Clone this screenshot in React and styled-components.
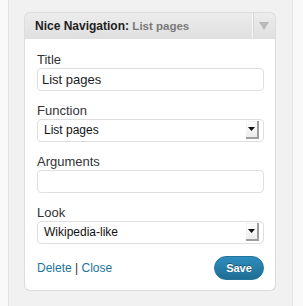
import styled, { createGlobalStyle } from 'styled-components';

const GlobalStyle = createGlobalStyle`
  html, body {
    margin: 0;
    padding: 0;
    background: #f9f9f9;
  }
  body {
    font-family: "Liberation Sans", Arial, sans-serif;
    color: #333;
  }
`;

const Column = styled.div`
  margin-left: 8px;
  width: 285px;
  height: 306px;
  box-sizing: border-box;
  border-left: 1px solid #e3e3e3;
  border-right: 1px solid #e3e3e3;
  background: #f1f1f1;
  padding: 12px 16px 0 15px;
`;

const Widget = styled.div`
  width: 252px;
`;

const Header = styled.div`
  display: flex;
  height: 27px;
  box-sizing: border-box;
  border: 1px solid #dcdcdc;
  border-bottom: none;
  border-radius: 6px 6px 0 0;
  background: linear-gradient(to bottom, #ececec, #dfdfdf);
`;

const HeaderTitle = styled.h3`
  flex: 1;
  margin: 0;
  padding-left: 10px;
  font-size: 12px;
  line-height: 26px;
  font-weight: bold;
  color: #1e1e1e;
  white-space: nowrap;
  span {
    font-size: 11.5px;
    color: #7a7a7a;
  }
`;

const Toggle = styled.div`
  width: 22px;
  display: flex;
  align-items: center;
  justify-content: center;
  border-left: 1px solid #f7f7f7;
  box-shadow: inset 1px 0 0 #d8d8d8;
`;

const Body = styled.div`
  background: #fff;
  border: 1px solid #dcdcdc;
  border-top: none;
  border-radius: 0 0 6px 6px;
  padding: 13px 11px 10px 12px;
`;

const Field = styled.div`
  margin-bottom: 12px;
`;

const Label = styled.label`
  display: block;
  font-size: 13px;
  line-height: 16px;
  color: #333;
`;

const Input = styled.input`
  display: block;
  width: 227px;
  height: 23px;
  box-sizing: border-box;
  border: 1px solid #dfdfdf;
  border-radius: 4px;
  padding: 0 4px;
  font-family: "Liberation Sans", Arial, sans-serif;
  font-size: 13px;
  color: #222;
  background: #fff;
  outline: none;
`;

const SelectBox = styled.div`
  display: flex;
  align-items: center;
  justify-content: space-between;
  width: 227px;
  height: 23px;
  box-sizing: border-box;
  border: 1px solid #dfdfdf;
  border-radius: 4px;
  padding: 0 4px 1px 6px;
  font-size: 12px;
  color: #111;
  background: #fff;
`;

const ArrowButton = styled.span`
  width: 13px;
  height: 18px;
  box-sizing: border-box;
  display: flex;
  align-items: center;
  justify-content: center;
  background: linear-gradient(to bottom, #ffffff, #ececec);
  border-right: 2px solid #9e9e9e;
  border-bottom: 2px solid #9e9e9e;
  box-shadow: inset 1px 1px 0 #f4f4f4;
`;

const Footer = styled.div`
  display: flex;
  align-items: center;
  justify-content: space-between;
  margin-top: 12px;
`;

const Links = styled.div`
  font-size: 12px;
  color: #333;
  a {
    color: #21759b;
    text-decoration: none;
  }
`;

const SaveButton = styled.button`
  width: 50px;
  height: 24px;
  border: 1px solid #21759b;
  border-radius: 12px;
  background: linear-gradient(to bottom, #2e8ebd, #1f6d93);
  color: #fff;
  font-family: "Liberation Sans", Arial, sans-serif;
  font-size: 11px;
  font-weight: bold;
  text-shadow: 0 -1px 0 rgba(0, 0, 0, 0.35);
  padding: 0;
`;

const Select = ({ value }) => (
  <SelectBox>
    <span>{value}</span>
    <ArrowButton>
      <svg width="7" height="4" viewBox="0 0 7 4">
        <path d="M0 0 H7 L3.5 4 Z" fill="#111" />
      </svg>
    </ArrowButton>
  </SelectBox>
);

export default function App() {
  return (
    <>
      <GlobalStyle />
      <Column>
        <Widget>
          <Header>
            <HeaderTitle>
              Nice Navigation: <span>List pages</span>
            </HeaderTitle>
            <Toggle>
              <svg width="10" height="8" viewBox="0 0 10 8">
                <path d="M0 0 H10 L5 8 Z" fill="#b9b9b9" />
              </svg>
            </Toggle>
          </Header>
          <Body>
            <Field>
              <Label>Title</Label>
              <Input defaultValue="List pages" />
            </Field>
            <Field>
              <Label>Function</Label>
              <Select value="List pages" />
            </Field>
            <Field>
              <Label>Arguments</Label>
              <Input defaultValue="" />
            </Field>
            <Field>
              <Label>Look</Label>
              <Select value="Wikipedia-like" />
            </Field>
            <Footer>
              <Links>
                <a href="#delete">Delete</a> | <a href="#close">Close</a>
              </Links>
              <SaveButton>Save</SaveButton>
            </Footer>
          </Body>
        </Widget>
      </Column>
    </>
  );
}
